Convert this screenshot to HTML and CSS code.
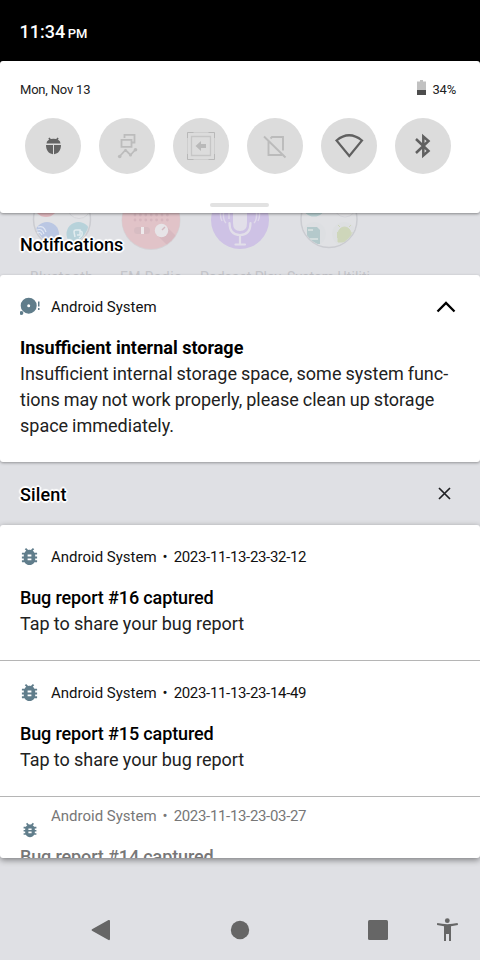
FILE: index.html
```html
<!DOCTYPE html>
<html lang="en">
<head>
<meta charset="utf-8">
<title>Notification shade</title>
<link rel="stylesheet" href="styles.css">
</head>
<body>
<svg class="defs" aria-hidden="true">
  <symbol id="bug" viewBox="2 2 20 20"><path d="M20 8h-2.810c-.45-.78-1.070-1.450-1.820-1.960L17 4.410 15.590 3l-2.170 2.170C12.960 5.060 12.490 5 12 5s-.96.060-1.410.170L8.410 3 7 4.410l1.620 1.630C7.880 6.550 7.260 7.220 6.810 8H4v2h2.090c-.05.330-.09.660-.09 1v1H4v2h2v1c0 .340.040.670.090 1H4v2h2.810c1.040 1.790 2.970 3 5.190 3s4.150-1.210 5.190-3H20v-2h-2.090c.05-.33.090-.66.090-1v-1h2v-2h-2v-1c0-.34-.04-.67-.09-1H20V8zm-6 8h-4v-2h4v2zm0-4h-4v-2h4v2z"/></symbol>
</svg>
<div class="screen">
  <header class="status"><span class="time">11:34</span><span class="ampm">PM</span></header>
  <section class="quick">
    <div class="quick-top">
      <span>Mon, Nov 13</span>
      <span class="battery">
        <svg width="9" height="15" viewBox="0 0 9 15"><path fill="#c1c1c1" d="M3 0h3v1.500h3V10H0V1.500h3z"/><path fill="#4d4d4d" d="M0 10h9v5H0z"/></svg>
        <span>34%</span>
      </span>
    </div>
    <div class="tiles">
      <span class="tile"><svg viewBox="0 0 56 56"><g fill="#646464"><path d="M21.500 25.500a7 4.800 0 0 1 14 0z"/><path d="M21 27h7v9.200C23.500 35.700 21 32 21 27zM29 27h7c0 5-2.500 8.700-7 9.200z"/></g><path d="M24 20l2 3M33 20l-2 3" stroke="#646464" stroke-width="1.700"/></svg></span>
      <span class="tile"><svg viewBox="0 0 56 56" fill="none" stroke="#bcbcbc" stroke-width="1.800"><path d="M25.500 20v-3.200h10v7.700h-2.500"/><path d="M22.500 21.800h10v7h-10z"/><path d="M20.500 38.500l6-6.500 5 5 5-5.500"/><g fill="#bcbcbc" stroke="none"><circle cx="20.700" cy="38.500" r="1.800"/><circle cx="26.500" cy="32.500" r="1.500"/><circle cx="31.500" cy="37" r="1.500"/><circle cx="36.500" cy="31.700" r="1.800"/></g></svg></span>
      <span class="tile"><svg viewBox="0 0 56 56" fill="none" stroke="#c6c6c6"><path d="M14.500 14.500h27v27h-27z" stroke="#cecece"/><path d="M14.500 20v-5.500h6M35.500 14.500h6V20M41.500 36v5.500h-6M20.500 41.500h-6V36" stroke="#b8b8b8"/><path d="M18.500 18.500h19v19h-19z" stroke-width="1.300"/><path fill="#b9b9b9" stroke="none" d="M22.500 28l5.500-5v3h5v4h-5v3z"/></svg></span>
      <span class="tile"><svg viewBox="0 0 56 56" fill="none" stroke="#bbbbbb" stroke-width="1.900"><path d="M23.500 20.500L25 19h11v13.500M21.500 22.500V37H35M17 18.500L38.500 39.500"/></svg></span>
      <span class="tile"><svg viewBox="0 0 56 56" fill="none" stroke="#606060" stroke-width="2.200"><path d="M15.500 22.500q12.500-10.500 25.500 0L28.300 38z"/></svg></span>
      <span class="tile"><svg viewBox="0 0 56 56" fill="none" stroke="#606060" stroke-width="2.500"><path d="M21 21l12.500 12-5.200 4.500v-19l5.200 4.500L21 35"/></svg></span>
    </div>
    <span class="handle"></span>
  </section>

  <div class="section-head">
    <svg class="wallpaper" viewBox="0 0 480 62">
      <defs>
        <clipPath id="f1"><circle cx="62" cy="6" r="27.500"/></clipPath>
        <clipPath id="f2"><circle cx="329" cy="6" r="27.500"/></clipPath>
        <clipPath id="fm"><circle cx="151" cy="7" r="29"/></clipPath>
      </defs>
      <circle cx="62" cy="6.500" r="28.500" fill="#e1e2e5" stroke="#cbccd1" stroke-width="1.500"/>
      <g clip-path="url(#f1)"><circle cx="46" cy="-8" r="12" fill="#e1b9bf"/><circle cx="79" cy="-6" r="11.500" fill="#e4e4e7" stroke="#d5d6da"/><circle cx="47" cy="21" r="12" fill="#bac7e3"/><circle cx="78.500" cy="21" r="12" fill="#b7d2da"/></g>
      <path d="M37 20q3-2 5 2M37 17q5-2 7 4M38 14q6-2 8 5" stroke="#e2e8f3" fill="none" stroke-width="1.200"/>
      <path d="M75 24l-1-5q0-2 2-2h4v5h-3M79 17l3 2q1 4-3 6" stroke="#e2ecef" fill="none" stroke-width="1.500"/>
      <circle cx="151" cy="7.500" r="29.500" fill="#d5d2d6"/>
      <circle cx="151" cy="7" r="29" fill="#e1c3c8"/>
      <g clip-path="url(#fm)"><path d="M167 14l15 15-9 9-17-17z" fill="#d8b9c0"/></g>
      <path d="M135 2h34M135 7h34" stroke="#d6b6be" stroke-width="2.800" stroke-linecap="round" stroke-dasharray="0 5.400"/>
      <rect x="134" y="14" width="16" height="7" rx="3.500" fill="#d7bcc2"/><path d="M142.500 14v7" stroke="#eeeaec" stroke-width="3"/>
      <circle cx="161.500" cy="17.500" r="6.700" fill="#e7e4e7"/><path d="M162 17l3-3" stroke="#d4b8bf" stroke-width="1.500"/>
      <circle cx="240" cy="7" r="29" fill="#cec2e5"/>
      <path d="M233-4h14v14q0 8-7 8t-7-8z" fill="#e2dfe9"/>
      <path d="M229.500 10q0 12 10.500 12t10.500-12M240 22v9M235.500 31.500h9.500" fill="none" stroke="#e2dfe9" stroke-width="2.200" stroke-linecap="round"/>
      <path d="M226 10q-3-3-2.500-10M229-1v7M222 8q-2-4-1.500-8M254 10q3-3 2.500-10M258 8q2-4 1.500-8" fill="none" stroke="#dfd9ea" stroke-width="1.400"/>
      <circle cx="329" cy="6.500" r="28" fill="#e0e1e4" stroke="#cbccd1" stroke-width="1.500"/>
      <g clip-path="url(#f2)"><circle cx="314" cy="-8" r="11.500" fill="#b8d0d2"/><circle cx="345" cy="-7" r="11" fill="#e3e3e6" stroke="#d5d6da"/><circle cx="314" cy="21" r="12" fill="#dddfe2"/><circle cx="344" cy="21" r="12" fill="#dddfe1"/><path d="M307 14h10l3 3v14h-13z" fill="#b4c9cb"/><path d="M308 17h5M310 26h8" stroke="#dbe3e4" stroke-width="1.500"/><path d="M338 21a6.500 7 0 0 1 13 0v8h-13zM337.500 19v6M352 19v6" fill="#ced6ba" stroke="#ced6ba" stroke-width="1"/><path d="M340 14l-2-2M349 14l2-2" stroke="#ced6ba"/></g>
      <g class="applabel"><text x="30" y="69" textLength="63">Bluetooth</text><text x="120" y="69" textLength="62">FM Radio</text><text x="200" y="69" textLength="81">Podcast Play</text><text x="287" y="69" textLength="83">System Utiliti</text></g>
    </svg>
    <h2 class="section-title">Notifications</h2>
  </div>

  <article class="card alert">
    <div class="meta">
      <svg class="app-icon" viewBox="0 0 20 20"><g fill="#607d8b"><path fill-rule="evenodd" d="M8.700.7a8 8 0 1 0 0 16 8 8 0 0 0 0-16zm0 6.500a1.500 1.500 0 1 1 0 3 1.500 1.500 0 0 1 0-3z"/><circle cx="1.400" cy="16" r="2"/><path d="M18 4.500h1.500v5H18zM18 11h1.500v2H18z"/></g></svg>
      <span>Android System</span>
      <svg class="chevron" width="20" height="12" viewBox="0 0 20 12"><path d="M1.500 10.500L10 2l8.500 8.500" fill="none" stroke="#000" stroke-width="2.300"/></svg>
    </div>
    <h3 class="title strong">Insufficient internal storage</h3>
    <p class="body">Insufficient internal storage space, some system func-<br>tions may not work properly, please clean up storage<br>space immediately.</p>
  </article>

  <div class="section-head silent">
    <h2 class="section-title">Silent</h2>
    <svg class="close" width="13" height="13" viewBox="0 0 13 13"><path d="M1 1l11 11M12 1L1 12" stroke="#202124" stroke-width="1.700"/></svg>
  </div>

  <div class="card list">
    <article class="report">
      <div class="meta"><svg class="app-icon bug"><use href="#bug"/></svg><span>Android System</span><span class="dot">•</span><span class="stamp">2023-11-13-23-32-12</span></div>
      <h3 class="title">Bug report #16 captured</h3>
      <p class="body">Tap to share your bug report</p>
    </article>
    <article class="report">
      <div class="meta"><svg class="app-icon bug"><use href="#bug"/></svg><span>Android System</span><span class="dot">•</span><span class="stamp">2023-11-13-23-14-49</span></div>
      <h3 class="title">Bug report #15 captured</h3>
      <p class="body">Tap to share your bug report</p>
    </article>
    <article class="report partial">
      <div class="meta"><svg class="app-icon bug"><use href="#bug"/></svg><span>Android System</span><span class="dot">•</span><span class="stamp">2023-11-13-23-03-27</span></div>
      <h3 class="title">Bug report #14 captured</h3>
    </article>
  </div>

  <nav class="nav">
    <svg viewBox="0 0 480 60" fill="#666"><path d="M92 29.300L108.500 20q1.500-.5 1.500 1v18q0 1.500-1.500 1L92 30.700q-1-.7 0-1.400z"/><circle cx="240" cy="30" r="9.200"/><rect x="368" y="20" width="20" height="20" rx="1.500"/><circle cx="447.300" cy="20.700" r="2.400"/><path d="M437.200 23q10 2.300 20.400 0l.4 2-7 1.200V41h-2v-7h-3v7h-2V26.200l-7-1.200z"/></svg>
  </nav>
</div>
</body>
</html>
```
FILE: styles.css
```css
* { box-sizing: border-box; }
body { margin: 0; background: #dfe0e4; font-family: Roboto, "Liberation Sans", sans-serif; color: #000; }
h2, h3, p { margin: 0; font-weight: 400; }
svg { display: block; flex: none; }
.defs { position: absolute; width: 0; height: 0; }
.screen { width: 480px; height: 960px; overflow: hidden; display: flex; flex-direction: column; background: linear-gradient(#000 66px, #dfe0e4 66px); }
.status { height: 61px; flex: none; padding: 21px 19.500px 0; display: flex; align-items: baseline; color: #fff; font-weight: 500; line-height: 22px; }
.time { font-size: 18px; }
.ampm { font-size: 13px; margin-left: 2.500px; }
.quick { height: 152px; flex: none; background: #fff; border-radius: 3px; display: flex; flex-direction: column; align-items: center; position: relative; z-index: 1; box-shadow: 0 1px 3px rgba(0,0,0,.4); }
.quick-top { width: 100%; display: flex; justify-content: space-between; padding: 19px 24px 0 20px; height: 57px; line-height: 20px; font-size: 13px; letter-spacing: -.2px; color: #222; }
.battery { display: flex; gap: 6px; }
.tiles { display: flex; gap: 18px; width: 426px; margin-right: 4px; }
.tile { width: 56px; height: 56px; border-radius: 50%; background: #dcdcdc; }
.handle { width: 59px; height: 4px; margin: 29px 1px 0 0; border-radius: 2px; background: #e2e2e2; }
.section-head { height: 62px; flex: none; position: relative; background: #dfe0e4; display: flex; align-items: center; justify-content: space-between; padding: 2px 29px 0 20px; }
.silent { height: 63px; }
.silent .section-title { letter-spacing: .15px; }
.wallpaper { position: absolute; left: 0; top: 0; width: 480px; height: 62px; }
.applabel { font-size: 14px; fill: #c4c5ca; }
.section-title { position: relative; font-size: 18px; font-weight: 500; line-height: 24px; text-shadow: 0 0 2px #fff, 1px 1px 1px #fff, -1px -1px 1px #fff, 1px -1px 1px #fff, -1px 1px 1px #fff, 2px 0 1px #fff, -2px 0 1px #fff, 0 2px 1px #fff, 0 -2px 1px #fff; }
.close { margin-top: -3px; }
.card { background: #fff; border-radius: 3px; flex: none; position: relative; z-index: 1; box-shadow: 0 1px 3px rgba(0,0,0,.35); }
.alert { height: 187px; padding: 20px 20px 0; }
.meta { display: flex; align-items: center; height: 24px; font-size: 15px; line-height: 24px; color: #111; }
.app-icon { width: 20px; height: 20px; margin-right: 11px; }
.chevron { margin-left: auto; margin-right: 4px; }
.title { margin-top: 16px; font-size: 18px; line-height: 26px; font-weight: 500; letter-spacing: -.13px; white-space: nowrap; }
.strong { font-weight: 700; letter-spacing: normal; }
.body { font-size: 18px; line-height: 26px; color: #212121; white-space: nowrap; word-spacing: -.25px; }
.alert .body { word-spacing: -.5px; }
.list { height: 333px; overflow: hidden; box-shadow: 0 2px 6px rgba(0,0,0,.45); }
.report { height: 136px; padding: 20px 20px 0; border-bottom: 1px solid #b5b5b5; }
.bug { width: 19px; height: 19px; margin: -1px 12px 0 0; fill: #607d8b; }
.dot { margin: 0 6px; }
.stamp { letter-spacing: -.33px; }
.partial { height: 61px; padding-top: 7px; border: 0; }
.partial .meta, .partial .title { color: #777; }
.partial .bug { width: 16px; height: 16px; margin: 28px 13px 0 2px; }
.nav { margin-top: 42px; height: 60px; flex: none; }
```
